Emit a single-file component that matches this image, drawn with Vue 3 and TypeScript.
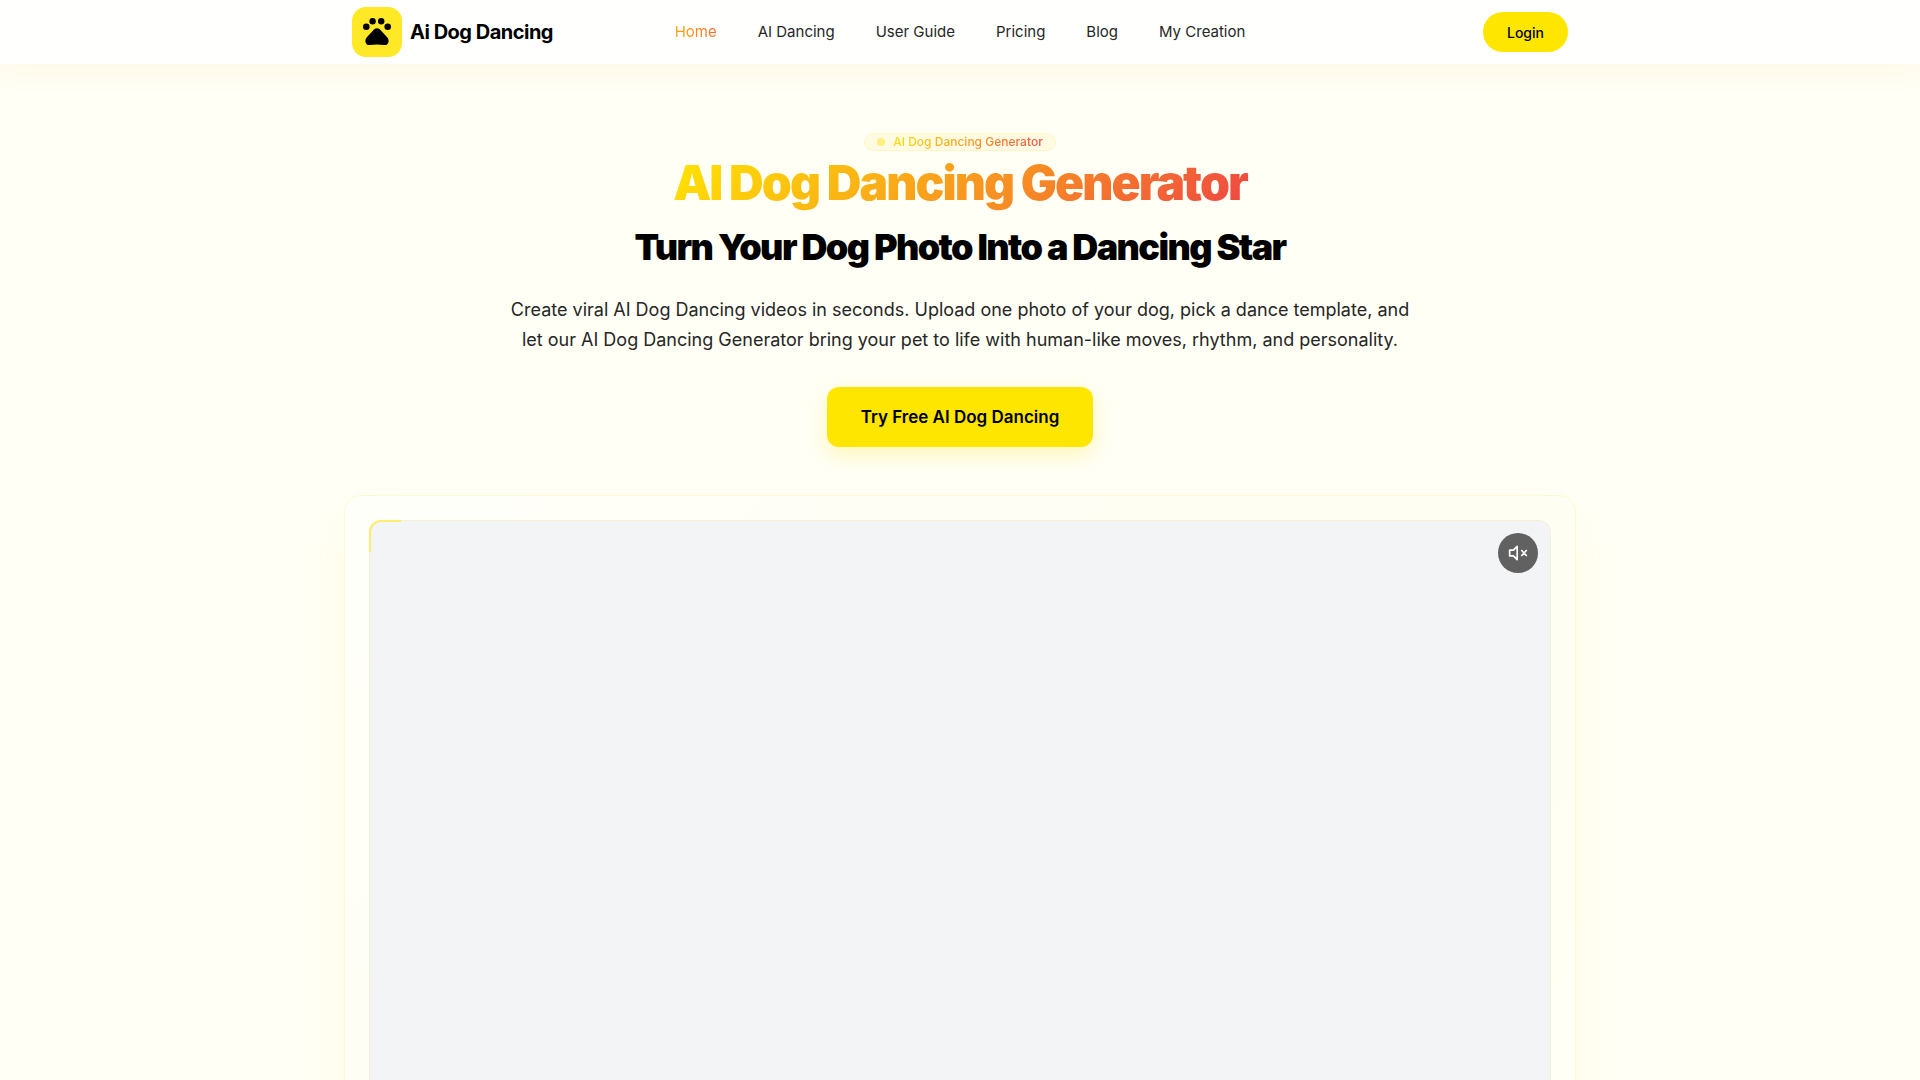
<script setup lang="ts">
interface NavItem {
  label: string
  href: string
  active?: boolean
}

const navItems: NavItem[] = [
  { label: 'Home', href: '#home', active: true },
  { label: 'AI Dancing', href: '#dancing' },
  { label: 'User Guide', href: '#guide' },
  { label: 'Pricing', href: '#pricing' },
  { label: 'Blog', href: '#blog' },
  { label: 'My Creation', href: '#creation' },
]
</script>

<template>
  <div class="page">
    <header class="header">
      <div class="header-inner">
        <a class="brand" href="#home">
          <svg class="logo" viewBox="0 0 50 50" aria-hidden="true">
            <rect width="50" height="50" rx="14" fill="#ffe826" />
            <g fill="#000">
              <circle cx="14.3" cy="19.7" r="3.3" />
              <circle cx="20.6" cy="14.2" r="3.2" />
              <circle cx="29.2" cy="14.2" r="3.2" />
              <circle cx="35.7" cy="19.7" r="3.3" />
              <path d="M22 22.4Q25 20 28 22.4L35.4 30.4C38 34 36.2 38.6 32 38Q25 37 18 38C13.8 38.6 12 34 14.6 30.4Z" />
            </g>
          </svg>
          <span class="brand-name">Ai Dog Dancing</span>
        </a>
        <nav class="nav" aria-label="Main">
          <a
            v-for="item in navItems"
            :key="item.label"
            :href="item.href"
            class="nav-link"
            :class="{ active: item.active }"
          >{{ item.label }}</a>
        </nav>
        <button class="login" type="button">Login</button>
      </div>
    </header>

    <main class="main">
      <section class="hero">
        <div class="badge">
          <span class="badge-dot"></span>
          <span class="badge-text">AI Dog Dancing Generator</span>
        </div>
        <h1 class="title">AI Dog Dancing Generator</h1>
        <h2 class="subtitle">Turn Your Dog Photo Into a Dancing Star</h2>
        <p class="lead">
          Create viral AI Dog Dancing videos in seconds. Upload one photo of your dog, pick a dance template, and
          let our AI Dog Dancing Generator bring your pet to life with human-like moves, rhythm, and personality.
        </p>
        <button class="cta" type="button">Try Free AI Dog Dancing</button>
      </section>

      <section class="frame">
        <div class="video">
          <span class="corner"></span>
          <button class="mute" type="button" aria-label="Unmute">
            <svg viewBox="0 0 24 24" width="20" height="20" fill="none" stroke="#fff" stroke-width="2" stroke-linecap="round" stroke-linejoin="round" aria-hidden="true">
              <path d="M11 4 6.5 8.5H2v7h4.5L11 20Z" />
              <path d="m22 9-5.5 6M16.500 9l5.500 6" />
            </svg>
          </button>
        </div>
      </section>
    </main>
  </div>
</template>

<style>
body {
  margin: 0;
  background: #fffff5;
}
</style>

<style scoped>
.page {
  height: 100vh;
  overflow: hidden;
  background: #fffff5;
  color: #000;
  font-family: Inter, "Liberation Sans", sans-serif;
}

button {
  border: 0;
  background: #ffe600;
  color: #000;
  font-family: inherit;
  cursor: pointer;
}

.header {
  position: relative;
  background: #fffffe;
  box-shadow: 0 8px 24px rgba(255, 160, 50, 0.07);
}

.header-inner {
  display: grid;
  grid-template-columns: 1fr auto 1fr;
  align-items: center;
  max-width: 1216px;
  height: 64px;
  margin: 0 auto;
}

.brand {
  display: flex;
  align-items: center;
  gap: 8px;
  color: #000;
  text-decoration: none;
}

.logo {
  width: 50px;
  height: 50px;
}

.brand-name {
  font-size: 20px;
  font-weight: 700;
  letter-spacing: -0.025em;
}

.nav {
  display: flex;
  gap: 41px;
}

.nav-link {
  color: #262626;
  font-size: 15px;
  line-height: 26px;
  text-decoration: none;
}

.nav-link.active {
  background: linear-gradient(90deg, #faa510, #f86c2c);
  background-clip: text;
  color: transparent;
}

.login {
  justify-self: end;
  height: 40px;
  padding: 0 24px;
  border-radius: 20px;
  font-size: 14px;
  font-weight: 500;
}

.main {
  max-width: 1232px;
  margin: 0 auto;
}

.hero {
  display: flex;
  flex-direction: column;
  align-items: center;
  padding: 69px 0 48px;
  text-align: center;
}

.badge {
  display: flex;
  align-items: center;
  gap: 8px;
  height: 16px;
  padding: 0 12px;
  border: 1px solid #fff7c4;
  border-radius: 9px;
  background: #fffae2;
}

.badge-dot {
  width: 8px;
  height: 8px;
  border-radius: 50%;
  background: #fff07a;
}

.badge-text {
  font-size: 12px;
  font-weight: 500;
  line-height: 16px;
}

.badge-text,
.title {
  background: linear-gradient(135deg, #ffe600, #f78c24 60%, #ef4444);
  background-clip: text;
  color: transparent;
}

.title {
  margin: 4px 0 0;
  padding: 0 4px;
  font-size: 48px;
  font-weight: 900;
  line-height: 56px;
  letter-spacing: -0.04em;
}

.subtitle {
  margin: 16px 0 0;
  font-size: 36px;
  font-weight: 900;
  line-height: 40px;
  letter-spacing: -0.045em;
}

.lead {
  max-width: 912px;
  margin: 28px 0 0;
  color: #262626;
  font-size: 18px;
  line-height: 30px;
}

.cta {
  height: 60px;
  margin-top: 32px;
  padding: 0 34px;
  border-radius: 12px;
  box-shadow: 0 8px 20px rgba(255, 220, 0, 0.25);
  font-size: 17px;
  font-weight: 600;
}

.frame {
  padding: 24px;
  border: 1px solid #fff9d2;
  border-radius: 16px;
  background: linear-gradient(135deg, #fffffa, #fffef2 50%, #fffff5);
  box-shadow: 0 24px 40px rgba(255, 215, 60, 0.07);
}

.video {
  position: relative;
  display: flex;
  justify-content: flex-end;
  align-items: flex-start;
  aspect-ratio: 16 / 9;
  box-sizing: border-box;
  padding: 12px;
  border: 1px solid #f5f0d2;
  border-radius: 12px;
  background: #f3f4f6;
}

.corner {
  position: absolute;
  top: -1px;
  left: -1px;
  width: 30px;
  height: 30px;
  border-top: 2px solid #ffec70;
  border-left: 2px solid #ffec70;
  border-top-left-radius: 12px;
}

.mute {
  display: grid;
  place-items: center;
  width: 40px;
  height: 40px;
  padding: 0;
  border-radius: 50%;
  background: #616161;
}
</style>
